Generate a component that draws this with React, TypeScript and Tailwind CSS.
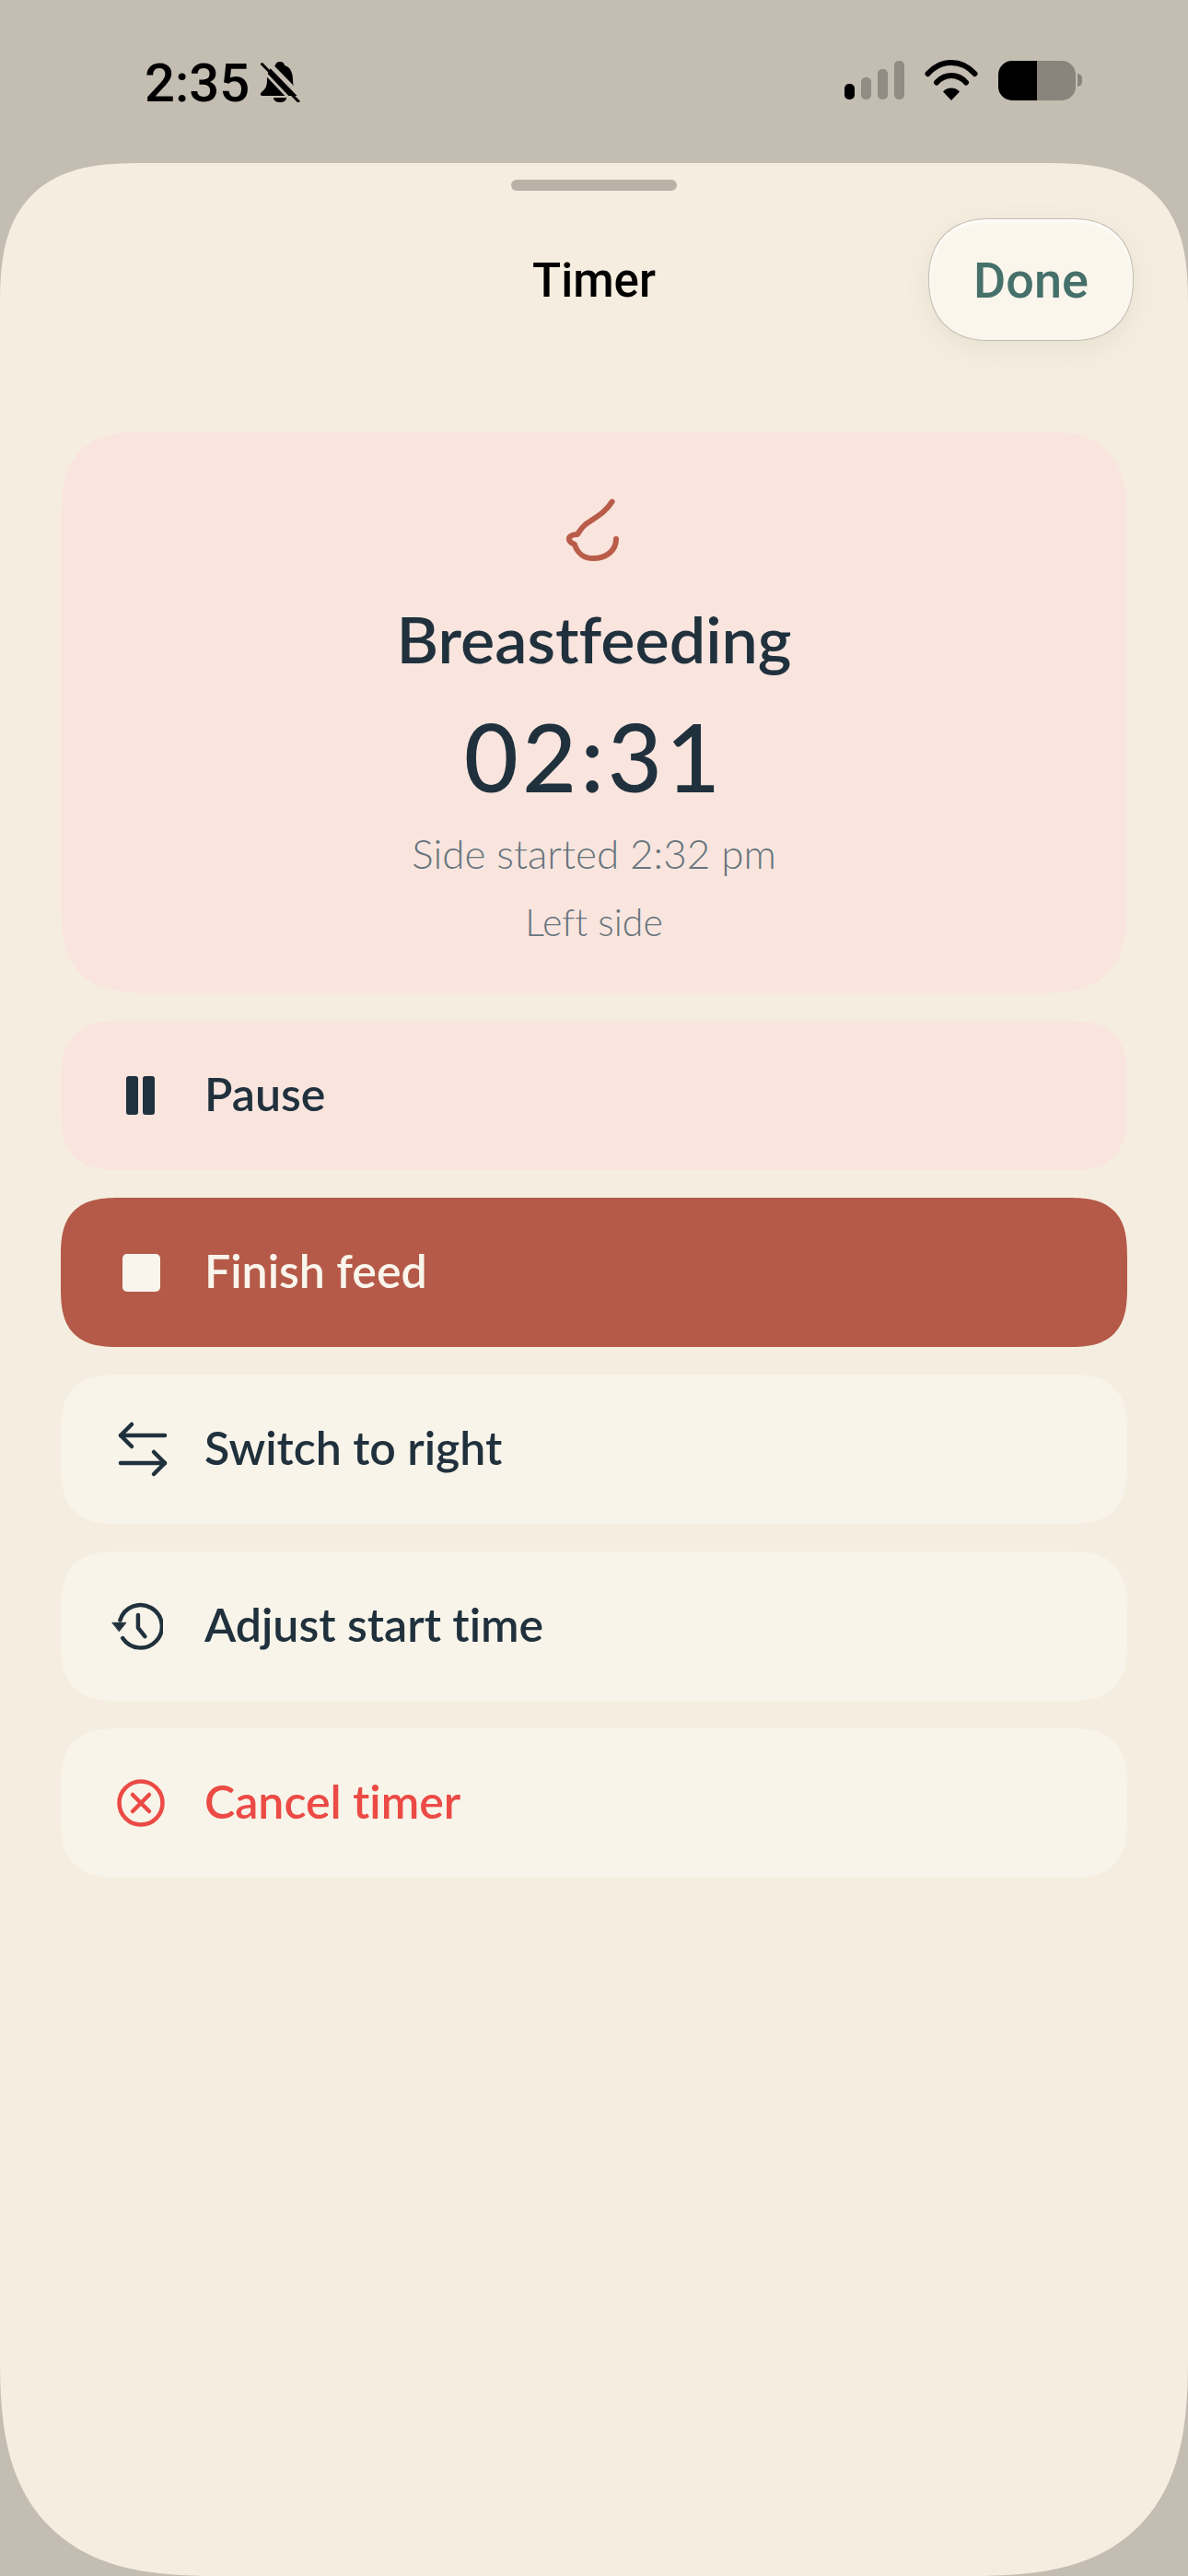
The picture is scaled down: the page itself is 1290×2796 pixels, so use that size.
import { ArrowLeftRight } from "lucide-react";

const lato = "[font-family:Lato,'Noto_Sans',sans-serif] [font-variant-ligatures:none]";

function Row({ bg, color, icon, label }: { bg: string; color: string; icon: React.ReactNode; label: string }) {
  return (
    <div className={`flex h-[162px] items-center gap-[39px] rounded-[66px] [corner-shape:superellipse(1.5)] px-[57px] ${bg} ${color}`}>
      <div className="flex w-[60px] shrink-0 items-center justify-center">{icon}</div>
      <span className={`${lato} mb-[5px] text-[50px] font-semibold leading-none`}>{label}</span>
    </div>
  );
}

export default function App() {
  return (
    <div className="flex h-[2796px] w-[1290px] flex-col overflow-hidden bg-[#c3bdb2]">
      {/* status bar */}
      <div className="flex h-[177px] shrink-0 items-start justify-between pl-[157px] pr-[112px] pt-[65px]">
        <div className="flex items-center gap-[11px]">
          <span className="mt-[3px] [font-family:Roboto,sans-serif] text-[58px] font-medium leading-[44px] text-black">2:35</span>
          <svg width="44" height="44" viewBox="0 0 44 44">
            <path d="M22 0c-3 0-5 2-5 4C10 6 8 13 8 20c0 6-2 10-6 13-2 2-1 4 1 4h38c2 0 3-2 1-4-4-3-6-7-6-13 0-7-2-14-9-16 0-2-2-4-5-4Z" fill="#000" />
            <path d="M15 39h14c0 4-4 5-7 5s-7-1-7-5Z" fill="#000" />
            <path d="M7 -1 47 40" stroke="#c3bdb2" strokeWidth="5" />
            <path d="M2.500 2.500 42 43" stroke="#000" strokeWidth="3" strokeLinecap="round" />
            <path d="M-2 4 37 45" stroke="#c3bdb2" strokeWidth="3" />
          </svg>
        </div>
        <div className="flex items-center gap-[22px]">
          <svg width="65" height="42" viewBox="0 0 65 42">
            <rect x="0" y="25" width="11" height="17" rx="5" fill="#000" />
            <rect x="18" y="18" width="11" height="24" rx="5" fill="#918c84" />
            <rect x="36" y="9" width="11" height="33" rx="5" fill="#918c84" />
            <rect x="54" y="0" width="11" height="42" rx="5" fill="#918c84" />
          </svg>
          <svg width="58" height="44" viewBox="0 0 58 44" fill="none" stroke="#000" strokeLinecap="round">
            <path d="M3.500 15C18 -1 40 -1 54.500 15" strokeWidth="6" />
            <path d="M13 24.500C22 14.500 36 14.500 45 24.500" strokeWidth="6" />
            <path d="M29 44 20 34.500C24.500 29 33.500 29 38 34.500Z" fill="#000" stroke="none" />
          </svg>
          <div className="mr-[3px] flex items-center gap-[2px]">
            <div className="flex h-[43px] w-[84px] overflow-hidden rounded-[15px]">
              <div className="w-[42px] bg-black" />
              <div className="flex-1 bg-[#8a857c]" />
            </div>
            <div className="h-[14px] w-[5px] rounded-r-full bg-[#8a857c]" />
          </div>
        </div>
      </div>

      {/* sheet */}
      <div className="flex flex-1 flex-col rounded-t-[155px] rounded-b-[240px] bg-[#f5eee0] [corner-shape:superellipse(1.45)]">
        <div className="mx-auto mt-[18px] h-[12px] w-[180px] rounded-full bg-[#bab2a6]" />

        <div className="mt-[30px] grid h-[133px] grid-cols-[1fr_auto_1fr] items-center px-[59px]">
          <div />
          <span className="mt-[2px] [font-family:Roboto,sans-serif] text-[51px] font-medium leading-none text-black">Timer</span>
          <div className="flex h-[133px] w-[223px] items-center justify-center justify-self-end rounded-[70px] border-[1.5px] border-[#c4bdb1] bg-[#fbf6ec] shadow-[0_8px_28px_rgba(120,105,80,0.10),inset_0_3px_5px_rgba(255,255,255,0.9)] [corner-shape:superellipse(1.2)]">
            <span className="mt-[2px] [font-family:Roboto,sans-serif] text-[54px] font-medium leading-none text-[#46706a]">Done</span>
          </div>
        </div>

        <div className="mt-[98px] flex flex-col gap-[30px] px-[66px]">
          <div className="flex h-[610px] flex-col items-center rounded-[98px] bg-[#f9e5de] pt-[68px] [corner-shape:superellipse(1.5)]">
            <svg width="80" height="80" viewBox="600 536 80 80" fill="none" stroke="#b95c4a" strokeWidth="6" strokeLinecap="round" strokeLinejoin="round" className="-translate-x-[3px]">
              <path d="M662.600 544.600C656 556 644 562 634 569 629 573 627 577 625 580 620 580 615 582 616 586 617 589 620 590 622 591 625 601 633 606 642 606 656 606 667 598 667 585" />
            </svg>
            <div className={`mt-[37px] ${lato} text-[70px] font-semibold leading-[80px] text-[#20313d]`}>Breastfeeding</div>
            <div className={`mt-[33px] ${lato} text-[102px] font-medium leading-[110px] tracking-[4px] text-[#20313d]`}>02:31</div>
            <div className={`mt-[22px] ${lato} text-[44px] font-light leading-[56px] text-[#66747c]`}>Side started 2:32 pm</div>
            <div className={`mt-[22px] ${lato} text-[41px] font-light leading-[50px] text-[#66747c]`}>Left side</div>
          </div>

          <Row
            bg="bg-[#f9e5de]"
            color="text-[#20313d]"
            label="Pause"
            icon={
              <svg width="32" height="42" viewBox="0 0 32 42" fill="#20313d">
                <rect x="0" y="0" width="13" height="42" rx="3" />
                <rect x="18" y="0" width="13" height="42" rx="3" />
              </svg>
            }
          />
          <Row
            bg="bg-[#b55a49]"
            color="text-[#f9f5ec]"
            label="Finish feed"
            icon={<div className="h-[41px] w-[41px] rounded-[5px] bg-[#f9f5ec]" />}
          />
          <Row
            bg="bg-[#f8f4e9]"
            color="text-[#20313d]"
            label="Switch to right"
            icon={<ArrowLeftRight size={72} strokeWidth={1.5} color="#20313d" className="shrink-0 translate-x-[2px]" />}
          />
          <Row
            bg="bg-[#f8f4e9]"
            color="text-[#20313d]"
            label="Adjust start time"
            icon={
              <svg width="56" height="52" viewBox="0 0 60 56" fill="none" stroke="#20313d" strokeWidth="4.800" strokeLinecap="round" strokeLinejoin="round" className="-translate-x-[4px]">
                <path d="M10 21A25 25 0 1 1 13 42" />
                <path d="M1 24H17L9 34Z" fill="#20313d" strokeWidth="1" />
                <path d="M31 15V30L39 40" />
              </svg>
            }
          />
          <Row
            bg="bg-[#f8f4e9]"
            color="text-[#ec4a45]"
            label="Cancel timer"
            icon={
              <svg width="54" height="54" viewBox="0 0 54 54" fill="none" stroke="#ec4a45" strokeWidth="4.500" strokeLinecap="round">
                <circle cx="27" cy="27" r="23.500" />
                <path d="M18 18 36 36M36 18 18 36" />
              </svg>
            }
          />
        </div>
      </div>
    </div>
  );
}
